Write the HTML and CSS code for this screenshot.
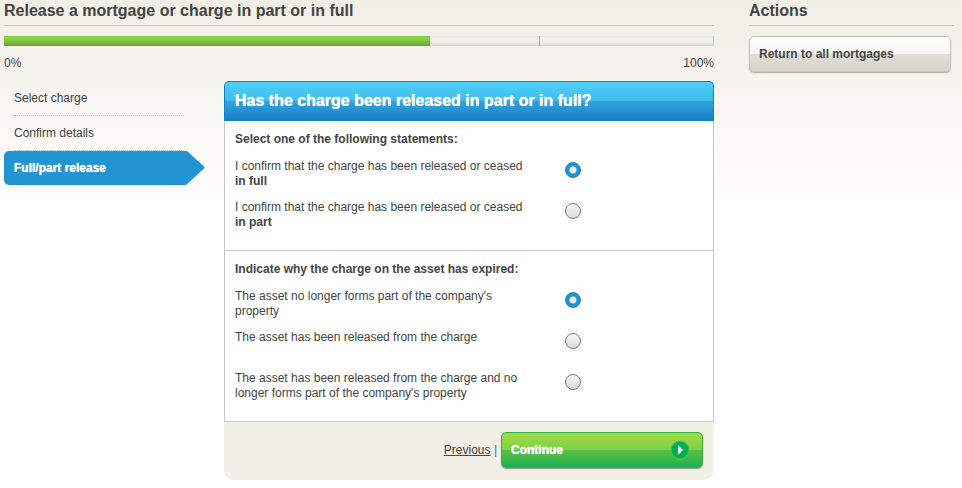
FILE: index.html
```html
<!DOCTYPE html>
<html lang="en">
<head>
    <meta charset="UTF-8">
    <meta name="viewport" content="width=device-width, initial-scale=1.0">
    <title>Release a mortgage or charge in part or in full</title>
    <link rel="stylesheet" href="styles.css">
</head>
<body>

<div class="page">
    <main>
        <h1 class="title">Release a mortgage or charge in part or in full</h1>
        <div class="progress">
            <div class="progress-done" style="width: 60%"></div>
            <div class="progress-step"></div>
        </div>
        <div class="progress-labels">
            <span>0%</span>
            <span>100%</span>
        </div>

        <div class="content">
            <nav class="steps">
                <a href="#" class="step">Select charge</a>
                <a href="#" class="step">Confirm details</a>
                <a href="#" class="step-active">
                    <span class="step-name">Full/part release</span>
                    <svg class="step-arrow" width="20" height="34" viewBox="0 0 20 34"><path d="M0 0h2l17 15.500q1 1 0 2L1 34H0z" fill="#2294d4"/></svg>
                </a>
            </nav>

            <form class="panel">
                <h2 class="panel-title">Has the charge been released in part or in full?</h2>

                <div class="group" role="radiogroup" aria-labelledby="release-title">
                    <h3 class="group-title" id="release-title">Select one of the following statements:</h3>
                    <div class="option">
                        <label for="in-full">I confirm that the charge has been released or ceased <b>in full</b></label>
                        <input type="radio" class="radio" id="in-full" name="release" checked>
                    </div>
                    <div class="option">
                        <label for="in-part">I confirm that the charge has been released or ceased <b>in part</b></label>
                        <input type="radio" class="radio" id="in-part" name="release">
                    </div>
                </div>

                <div class="group" role="radiogroup" aria-labelledby="reason-title">
                    <h3 class="group-title" id="reason-title">Indicate why the charge on the asset has expired:</h3>
                    <div class="option">
                        <label for="no-longer">The asset no longer forms part of the company's property</label>
                        <input type="radio" class="radio" id="no-longer" name="reason" checked>
                    </div>
                    <div class="option">
                        <label for="released">The asset has been released from the charge</label>
                        <input type="radio" class="radio" id="released" name="reason">
                    </div>
                    <div class="option">
                        <label for="both">The asset has been released from the charge and no longer forms part of the company's property</label>
                        <input type="radio" class="radio" id="both" name="reason">
                    </div>
                </div>

                <div class="panel-footer">
                    <span><a href="#" class="previous">Previous</a> <span class="divider">|</span></span>
                    <button type="submit" class="continue-button">
                        Continue
                        <svg width="20" height="20" viewBox="0 0 20 20">
                            <circle cx="10" cy="10" r="9" fill="#00b050" stroke="#55c747"/>
                            <path d="M8 5v10l5-5z" fill="#fff"/>
                        </svg>
                    </button>
                </div>
            </form>
        </div>
    </main>

    <aside>
        <h2 class="title">Actions</h2>
        <button type="button" class="return-button">Return to all mortgages</button>
    </aside>
</div>

</body>
</html>
```
FILE: styles.css
```css
* {
    box-sizing: border-box;
}
body {
    margin: 0;
    font-family: Arial, "Liberation Sans", sans-serif;
    font-size: 12px;
    line-height: 15px;
    color: #444;
    background: #fff linear-gradient(#f2efe7, #f3f0e9 30px, #fff 210px) no-repeat;
}
.page {
    display: grid;
    grid-template-columns: 1fr 205px;
    gap: 35px;
    padding: 0 8px 8px 4px;
}
.title {
    margin: 0 0 10px;
    padding-bottom: 4px;
    font-size: 16px;
    line-height: 21px;
    border-bottom: 1px solid #cac8c2;
}
.progress {
    display: flex;
    height: 10px;
    background: linear-gradient(#e8e8e6, #f3f3f2 30%, #ececeb 60%, #d8d8d6);
    box-shadow: inset -1px 0 1px #ccc;
}
.progress-done {
    background: linear-gradient(#7fc63f, #8ad545 20%, #80c43f 50%, #6ea335);
}
.progress-step {
    width: 110px;
    border-right: 1px solid #aaa;
}
.progress-labels {
    display: flex;
    justify-content: space-between;
    padding: 10px 0;
}
.content {
    display: grid;
    grid-template-columns: 201px 1fr;
    gap: 19px;
    align-items: start;
}
.step {
    display: block;
    margin: 0 21px 0 10px;
    padding: 10px 0 9px;
    color: #444;
    text-decoration: none;
    border-bottom: 1px dotted #bbb;
}
.step-active {
    display: flex;
    height: 34px;
    color: #fff;
    font-weight: bold;
    text-decoration: none;
    text-shadow: 0 0 1px #fff;
}
.step-name {
    flex: 1;
    padding: 10px;
    background: #2294d4;
    border-radius: 5px 0 0 5px;
}
.step-arrow {
    display: block;
}
.panel {
    margin: 0;
}
.panel-title {
    margin: 0;
    padding: 8px 10px;
    font-size: 16px;
    line-height: 21px;
    color: #fff;
    text-shadow: 0 0 1px #fff;
    background: linear-gradient(#52d0fb, #3dbcec 50%, #30a2de 50%, #1780c5);
    border: 1px solid #1780c5;
    border-bottom: 0;
    border-radius: 5px 5px 0 0;
    min-height: 40px;
}
.group {
    display: flex;
    flex-direction: column;
    gap: 11px;
    padding: 11px 10px 20px;
    background: #fff;
    border: 1px solid #c8c8c8;
    border-top: 0;
}
.group-title {
    margin: 0 0 1px;
    font-size: 12px;
}
.option {
    display: grid;
    grid-template-columns: 290px 16px;
    gap: 40px;
    align-items: start;
    min-height: 30px;
}
.radio {
    appearance: none;
    width: 16px;
    height: 16px;
    margin: 3px 0 0;
    border: 1px solid #777;
    border-radius: 50%;
    background: linear-gradient(#fafafa, #d9d9d9);
}
.radio:checked {
    border-color: #2580b8;
    background: radial-gradient(circle, #f0f0f0 3px, #2294d4 4px);
}
.panel-footer {
    display: flex;
    justify-content: flex-end;
    align-items: center;
    gap: 4px;
    padding: 10px 11px 12px;
    background: #f2efe7;
    border-radius: 0 0 10px 10px;
}
.previous {
    color: #444;
}
.divider {
    color: #2580b8;
}
.continue-button, .return-button {
    display: flex;
    align-items: center;
    justify-content: space-between;
    width: 202px;
    height: 36px;
    font-family: inherit;
    font-size: 12px;
    font-weight: bold;
    text-align: left;
    border-radius: 5px;
    cursor: pointer;
}
.continue-button {
    padding: 0 12px 0 9px;
    color: #fff;
    text-shadow: 0 0 1px #fff;
    background: linear-gradient(#a2da43, #7dd14a 50%, #5cc046 50%, #1db04c);
    border: 1px solid #35b04a;
    box-shadow: 0 1px 1px #999;
}
.return-button {
    padding: 0 9px;
    color: #444;
    background: linear-gradient(#fff, #f7f6f4 50%, #e2dfd9 50%, #dad3c6);
    border: 1px solid #c2c2c0;
    box-shadow: 0 1px 1px #aaa;
}
```
